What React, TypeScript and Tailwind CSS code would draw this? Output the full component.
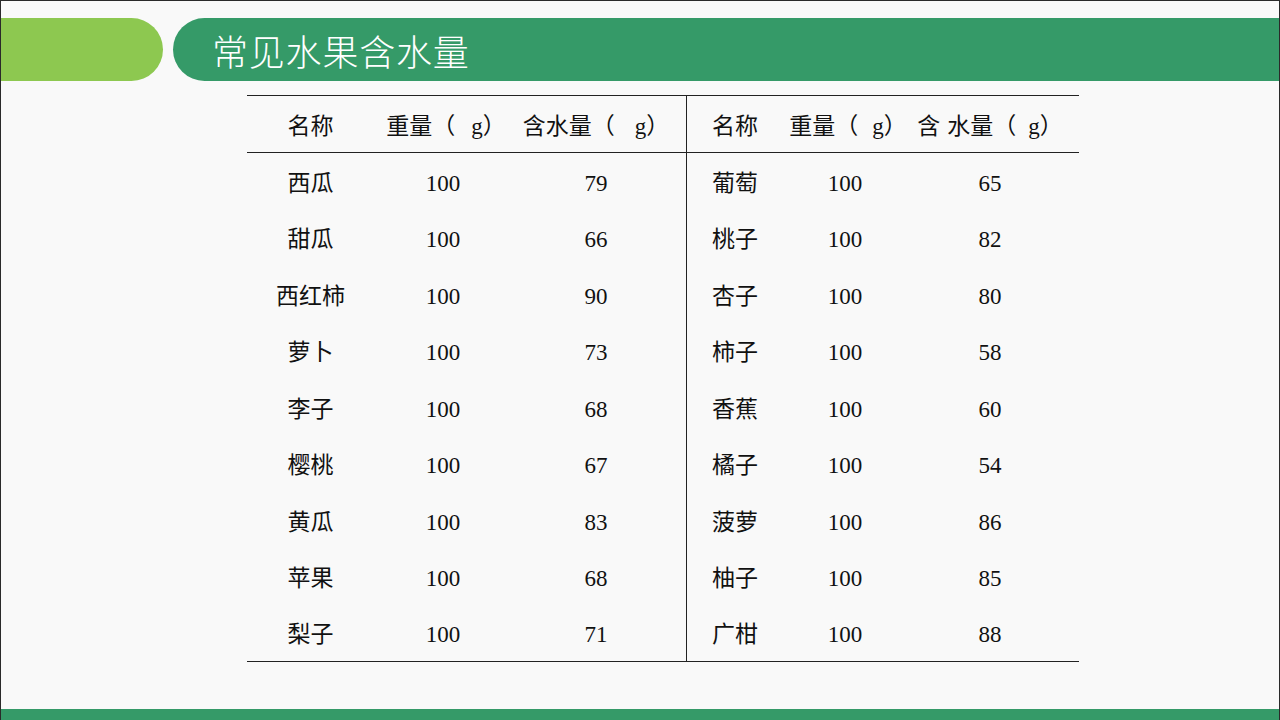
import type { ReactNode } from 'react';

const left = [
  ['西瓜', '100', '79'],
  ['甜瓜', '100', '66'],
  ['西红柿', '100', '90'],
  ['萝卜', '100', '73'],
  ['李子', '100', '68'],
  ['樱桃', '100', '67'],
  ['黄瓜', '100', '83'],
  ['苹果', '100', '68'],
  ['梨子', '100', '71'],
];

const right = [
  ['葡萄', '100', '65'],
  ['桃子', '100', '82'],
  ['杏子', '100', '80'],
  ['柿子', '100', '58'],
  ['香蕉', '100', '60'],
  ['橘子', '100', '54'],
  ['菠萝', '100', '86'],
  ['柚子', '100', '85'],
  ['广柑', '100', '88'],
];

// fullwidth brackets kept at a full em box
const Open = () => <span className="inline-block w-[1em] text-right">（</span>;
const Close = () => <span className="inline-block w-[1em] text-left">）</span>;

const header: ReactNode[] = [
  '名称',
  <>重量<Open /><span className="inline-block w-[16px]" />g<Close /></>,
  <>含水量<Open /><span className="inline-block w-[20px]" />g<Close /></>,
  '名称',
  <>重量<Open /><span className="inline-block w-[14px]" />g<Close /></>,
  <>含<span className="inline-block w-[7px]" />水量<Open /><span className="inline-block w-[12px]" />g<Close /></>,
];

export default function App() {
  const rows = left.map((r, i) => [...r, ...right[i]]);

  return (
    <div
      className="w-[1280px] h-[720px] flex flex-col bg-[#f9f9f9] border-l border-t border-r border-[#2a2a2a] overflow-hidden"
      style={{ fontFamily: '"Liberation Serif", "Noto Sans CJK SC", serif' }}
    >
      {/* Title bar */}
      <header className="mt-[17px] h-[63px] flex items-stretch gap-[10px]">
        <div className="w-[162px] bg-[#8dc850] rounded-r-full" />
        <div className="flex-1 bg-[#359a68] rounded-l-full flex items-center pl-[39px]">
          <h1
            className="text-white text-[36px] font-light leading-none tracking-[0.8px]"
            style={{ fontFamily: '"Noto Sans CJK SC", sans-serif' }}
          >
            常见水果含水量
          </h1>
        </div>
      </header>

      {/* Table */}
      <section className="mt-[14px] ml-[246px] w-[832px]">
        <div className="grid grid-cols-[133px_132px_174px_103px_118px_172px] text-[23px] text-[#111]">
          {header.map((h, i) => (
            <div
              key={'h' + i}
              className={`h-[58px] flex items-center justify-center pt-[6px] ${i === 1 || i === 4 ? 'pr-0' : 'pr-[6px]'} whitespace-nowrap border-t border-b border-[#222] ${i === 3 ? 'border-l' : ''}`}
            >
              <span>{h}</span>
            </div>
          ))}
          {rows.map((r, ri) =>
            r.map((c, ci) => (
              <div
                key={ri + '-' + ci}
                className={`h-[56.5px] flex items-center justify-center pt-[5px] pr-[6px] border-[#222] ${ci === 3 ? 'border-l' : ''} ${ri === rows.length - 1 ? 'border-b' : ''}`}
              >
                {c}
              </div>
            ))
          )}
        </div>
      </section>

      <div className="flex-1" />
      <footer className="h-[11px] bg-[#359a68]" />
    </div>
  );
}
